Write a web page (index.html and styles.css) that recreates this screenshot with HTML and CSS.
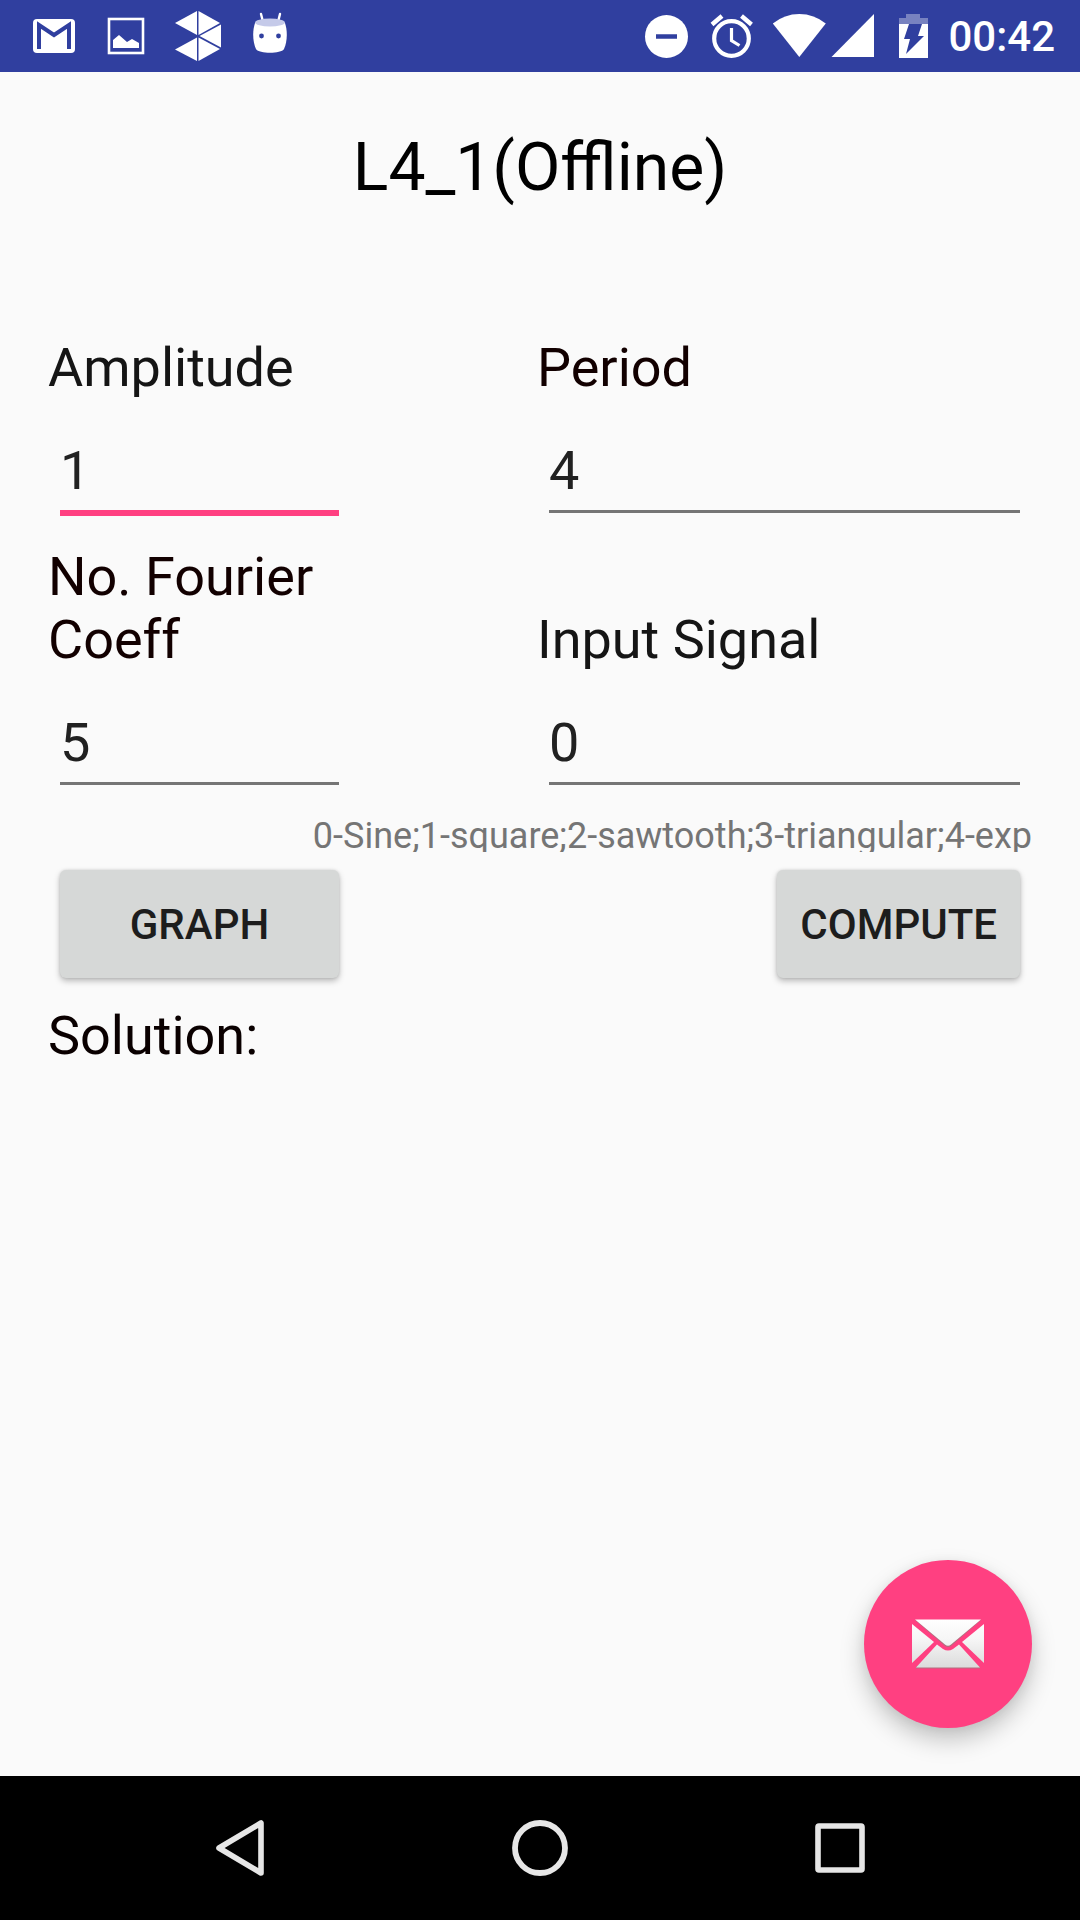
FILE: index.html
```html
<!DOCTYPE html>
<html lang="en">
<head>
<meta charset="utf-8">
<meta name="viewport" content="width=device-width, initial-scale=1">
<title>L4_1(Offline)</title>
<link rel="stylesheet" href="styles.css">
</head>
<body>
<header class="status-bar">
  <div class="notifications">
    <svg width="48" height="72" viewBox="0 0 48 72" aria-hidden="true">
      <rect x="3" y="19" width="42" height="34" rx="4" fill="#fff"/>
      <path d="M9 49V25l15 10 15-10v24" fill="none" stroke="#303f9f" stroke-width="4"/>
    </svg>
    <svg width="48" height="72" viewBox="0 0 48 72" aria-hidden="true">
      <rect x="7" y="19" width="34" height="34" fill="none" stroke="#fff" stroke-width="2.6"/>
      <path d="M11 48v-8l6-5 8 7 5-3 7 4v5z" fill="#fff"/>
    </svg>
    <svg width="48" height="72" viewBox="0 0 48 72" aria-hidden="true">
      <g fill="#fff">
        <path d="M23 11v24L1 23z"/>
        <path d="M24.500 11L46 23 24.500 35z"/>
        <path d="M47 24.500v23L25.500 36z"/>
        <path d="M24.500 37.500L46 49 24.500 61z"/>
        <path d="M23 37.500V61L1 49.500z"/>
      </g>
    </svg>
    <svg width="48" height="72" viewBox="0 0 48 72" aria-hidden="true">
      <path d="M15 14l2 8M34 14l-2 8" stroke="#fff" stroke-width="2.400" stroke-linecap="round"/>
      <path d="M9 23C6 32 7 43 10 49c3 5 25 5 28 0 3-6 4-17 1-26z" fill="#fff"/>
      <ellipse cx="24" cy="22.500" rx="15" ry="4" fill="#c5cae9"/>
      <circle cx="15.500" cy="36" r="2.400" fill="#303f9f"/>
      <circle cx="32.500" cy="36" r="2.400" fill="#303f9f"/>
    </svg>
  </div>
  <div class="system-state">
    <svg class="spaced" width="48" height="72" viewBox="0 0 48 72" aria-hidden="true">
      <circle cx="24.500" cy="36.500" r="21.500" fill="#fff"/>
      <path d="M14 36.500h21" stroke="#303f9f" stroke-width="4.500"/>
    </svg>
    <svg width="48" height="72" viewBox="0 0 48 72" aria-hidden="true">
      <circle cx="23.500" cy="38.500" r="17.300" fill="none" stroke="#fff" stroke-width="4.200"/>
      <path d="M4 24.500l10-8.500M43.500 24.500L33.500 16" stroke="#fff" stroke-width="4.400"/>
      <path d="M23.500 28v12.500l8 5" fill="none" stroke="#fff" stroke-width="3.200"/>
    </svg>
    <svg class="wifi" width="56" height="72" viewBox="0 0 56 72" aria-hidden="true">
      <path d="M.8 23.500Q12.500 14 27.300 14t26.500 9.500L27.300 57z" fill="#fff"/>
    </svg>
    <svg width="48" height="72" viewBox="0 0 48 72" aria-hidden="true">
      <path d="M46 14v43H3.500z" fill="#fff"/>
    </svg>
    <svg class="battery" width="30" height="72" viewBox="0 0 30 72" aria-hidden="true">
      <path d="M1 25v-7h7v-4h14v4h8v7z" fill="#fff" opacity=".35"/>
      <path d="M1 24h29v34H1z" fill="#fff"/>
      <path d="M11 24h13l-4 12h6L8 54l4-15H6z" fill="#303f9f"/>
    </svg>
    <time class="clock" datetime="00:42">00:42</time>
  </div>
</header>

<main class="screen">
  <h1 class="title">L4_1(Offline)</h1>
  <form class="form" onsubmit="return false">
    <div class="fields">
      <div class="field active">
        <label class="label soft" for="amplitude">Amplitude</label>
        <input class="value" id="amplitude" type="text" inputmode="decimal" value="1">
      </div>
      <div class="field">
        <label class="label" for="period">Period</label>
        <input class="value" id="period" type="text" inputmode="decimal" value="4">
      </div>
      <div class="field">
        <label class="label" for="coeff">No. Fourier Coeff</label>
        <input class="value" id="coeff" type="text" inputmode="numeric" value="5">
      </div>
      <div class="field">
        <label class="label soft" for="signal">Input Signal</label>
        <input class="value" id="signal" type="text" inputmode="numeric" value="0" aria-describedby="signal-hint">
      </div>
    </div>
    <p class="hint" id="signal-hint">0-Sine;1-square;2-sawtooth;3-triangular;4-exp</p>
    <div class="actions">
      <button class="button" type="button">GRAPH</button>
      <button class="button compute" type="submit">COMPUTE</button>
    </div>
  </form>
  <p class="solution">Solution:</p>

  <button class="fab" type="button" aria-label="Email">
    <svg width="72" height="50" viewBox="0 0 72 50" aria-hidden="true">
      <defs>
        <linearGradient id="paper" x1="0" y1="0" x2="0" y2="50" gradientUnits="userSpaceOnUse">
          <stop offset="0" stop-color="#fff"/>
          <stop offset=".4" stop-color="#f6f6f6"/>
          <stop offset="1" stop-color="#dadada"/>
        </linearGradient>
      </defs>
      <g fill="#b0707f">
        <path d="M3 1h66L39 27q-3 2-6 0z"/>
        <path d="M4 49.500v-2h64v2z"/>
      </g>
      <g fill="url(#paper)">
        <path d="M3 0.500h66L39 25.500q-3 2.500-6 0z"/>
        <path d="M0 5l22 18L0 44z"/>
        <path d="M72 5L50 23l22 21z"/>
        <path d="M4 48.500l21-23 6 4.500q5 3 10 0l6-4.500 21 23z"/>
      </g>
    </svg>
  </button>
</main>

<nav class="nav-bar">
  <button class="nav-button" type="button" aria-label="Back">
    <svg width="60" height="60" viewBox="0 0 60 60">
      <path d="M51 5v50L9 30z" fill="none" stroke="#e6e6e6" stroke-width="5.600" stroke-linejoin="round"/>
    </svg>
  </button>
  <button class="nav-button" type="button" aria-label="Home">
    <svg width="60" height="60" viewBox="0 0 60 60">
      <circle cx="30" cy="30" r="25" fill="none" stroke="#e6e6e6" stroke-width="5.800"/>
    </svg>
  </button>
  <button class="nav-button" type="button" aria-label="Overview">
    <svg width="60" height="60" viewBox="0 0 60 60">
      <rect x="8" y="8" width="44" height="44" rx="1" fill="none" stroke="#e6e6e6" stroke-width="5.600"/>
    </svg>
  </button>
</nav>
</body>
</html>
```
FILE: styles.css
```css
* {
  box-sizing: border-box;
}

body {
  margin: 0;
  min-height: 100vh;
  display: flex;
  flex-direction: column;
  background: #fafafa;
  color: #120000;
  font-family: Roboto, "Noto Sans", sans-serif;
  font-size: 54px;
  line-height: 63px;
}

svg {
  display: block;
}

button,
input {
  font: inherit;
}

/* Status bar */
.status-bar {
  display: flex;
  justify-content: space-between;
  height: 72px;
  padding: 0 25px 0 30px;
  background: #303f9f;
  color: #fff;
}

.notifications {
  display: flex;
  gap: 24px;
}

.system-state {
  display: flex;
}

.spaced {
  margin-right: 18px;
}

.wifi {
  margin-left: 16px;
}

.battery {
  margin: 0 20px 0 22px;
}

.clock {
  font-size: 42px;
  font-weight: 500;
  line-height: 74px;
}

/* Screen */
.screen {
  position: relative;
  flex: 1;
  padding: 57px 48px 0;
}

.title {
  margin: 0 0 130px;
  color: #000;
  font-size: 66px;
  font-weight: 400;
  line-height: 77px;
  text-align: center;
}

.fields,
.actions {
  display: grid;
  grid-template-columns: minmax(0, 303fr) minmax(0, 495fr);
  column-gap: 186px;
}

.fields {
  row-gap: 29px;
}

.field {
  display: flex;
  flex-direction: column;
  justify-content: flex-end;
  min-width: 0;
}

.label.soft {
  color: #151515;
}

.value {
  min-width: 0;
  height: 74px;
  margin: 40px 12px 3px;
  padding: 0 0 8px;
  border: 0;
  border-bottom: 3px solid #757575;
  border-radius: 0;
  background: none;
  color: #212121;
  outline: none;
}

.active .value {
  height: 77px;
  margin-bottom: 0;
  border-bottom: 6px solid #ff4081;
}

.hint {
  height: 37px;
  margin: 27px 0 18px;
  overflow: hidden;
  color: #757575;
  font-size: 36px;
  line-height: 42px;
  text-align: right;
  white-space: nowrap;
}

.button {
  height: 108px;
  margin: 0 12px;
  padding: 0 23px;
  border: 0;
  border-radius: 6px;
  background: #d6d8d7;
  box-shadow: 0 3px 6px rgba(0, 0, 0, 0.26), 0 0 3px rgba(0, 0, 0, 0.12);
  color: #1d1d1d;
  font-size: 42px;
  font-weight: 500;
}

.compute {
  justify-self: end;
}

.solution {
  margin: 26px 0 0;
  color: #0a0000;
}

.fab {
  position: absolute;
  right: 48px;
  bottom: 48px;
  display: flex;
  align-items: center;
  justify-content: center;
  width: 168px;
  height: 168px;
  padding: 0;
  border: 0;
  border-radius: 50%;
  background: #ff4081;
  box-shadow: 0 12px 24px rgba(0, 0, 0, 0.22), 0 2px 12px rgba(0, 0, 0, 0.06);
}

/* Navigation bar */
.nav-bar {
  display: flex;
  height: 144px;
  padding: 0 90px;
  background: #000;
}

.nav-button {
  display: flex;
  flex: 1;
  align-items: center;
  justify-content: center;
  padding: 0;
  border: 0;
  background: none;
}
```
